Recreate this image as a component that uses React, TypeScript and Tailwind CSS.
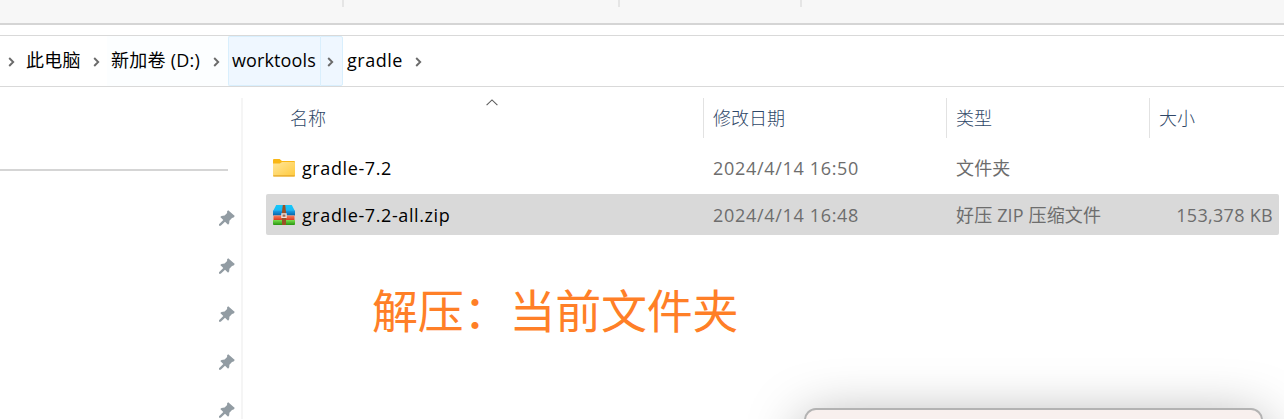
import React from 'react';

const SANS = "font-['Open_Sans','Noto_Sans_CJK_SC',sans-serif]";

function Chevron({ cell }: { cell: string }) {
  return (
    <span className={`flex h-full shrink-0 items-center justify-center ${cell}`}>
      <svg width="7" height="10" viewBox="0 0 7 10" className="mt-px" fill="none" stroke="#6b6b6b" strokeWidth="1.9">
        <path d="M1.2 1 5.2 5 1.2 9" />
      </svg>
    </span>
  );
}

function Pin() {
  return (
    <svg width="16" height="16" viewBox="0 0 16 16" className="shrink-0" fill="#929ca3">
      <path d="M9.2 0.2 15.8 6 14.6 7.6 13 7.9 10.4 10.7 10.2 13.3 9.1 14.7 6 11.8 1.7 15.8H0V14.2L4.3 9.9 1.3 7.1 2.5 5.9 5.6 5.6 8.1 2.9 8.1 1.3Z" />
    </svg>
  );
}

function FolderIcon() {
  return (
    <svg width="22" height="18" viewBox="0 0 22 18" className="shrink-0">
      <defs>
        <linearGradient id="folder" x1="0" y1="0" x2="1" y2="1">
          <stop offset="0" stopColor="#ffe69b" />
          <stop offset="1" stopColor="#ffca3c" />
        </linearGradient>
      </defs>
      <path d="M0 1Q0 0 1 0H6.6L9 2H21Q22 2 22 3V8H0Z" fill="#f9b716" />
      <path d="M0 4.6H6.8L9 3H21.2Q22 3 22 4V16.4Q22 17.5 21 17.5H1Q0 17.5 0 16.4Z" fill="url(#folder)" />
      <path d="M0.3 16.3H21.7V17.5H0.3Z" fill="#e3a529" />
    </svg>
  );
}

function ZipIcon() {
  return (
    <svg width="22" height="20" viewBox="0 0 22 20" className="shrink-0">
      <defs>
        <linearGradient id="lid" x1="0" y1="0" x2="0" y2="1">
          <stop offset="0" stopColor="#12c9fb" />
          <stop offset="1" stopColor="#20b7f2" />
        </linearGradient>
        <linearGradient id="blue" x1="0" y1="0" x2="0" y2="1">
          <stop offset="0" stopColor="#1ba0e8" />
          <stop offset="1" stopColor="#0565a8" />
        </linearGradient>
        <linearGradient id="red" x1="0" y1="0" x2="0" y2="1">
          <stop offset="0" stopColor="#ff805e" />
          <stop offset="1" stopColor="#d63b20" />
        </linearGradient>
        <linearGradient id="green" x1="0" y1="0" x2="0" y2="1">
          <stop offset="0" stopColor="#7be04d" />
          <stop offset="1" stopColor="#26940f" />
        </linearGradient>
      </defs>
      <path d="M3.2 0H18.8L22 6.2H0Z" fill="url(#lid)" />
      <path d="M0 5.6H22V10.5H0Z" fill="url(#blue)" />
      <path d="M0.5 10.5H21.5V15H0.5Z" fill="url(#red)" />
      <path d="M0 15H22V19.3Q22 20 21 20H1Q0 20 0 19.3Z" fill="url(#green)" />
      <path d="M9.8 0H12.2L13 7V20H9V7Z" fill="#9a5126" />
      <path d="M8.9 8.9H13.1V12.3H8.9Z" fill="#a06b55" stroke="#ece4e0" strokeWidth="1.3" />
    </svg>
  );
}

function TopStrip() {
  return (
    <div className="flex h-[25px] shrink-0 border-b-2 border-[#d5d5d5] bg-[#f7f7f7]">
      <div className="h-[7px] w-[344px] border-r-2 border-[#e5e5e5]" />
      <div className="h-[7px] w-[276px] border-r-2 border-[#e5e5e5]" />
      <div className="h-[7px] w-[182px] border-r-2 border-[#e5e5e5]" />
    </div>
  );
}

function AddressBar() {
  return (
    <nav className="mt-[10px] flex h-[52px] shrink-0 items-center whitespace-pre border-y border-[#d9d9d9] text-[18px] text-black">
      <Chevron cell="w-[23px]" />
      <span className="w-[62px] pb-[2px] pl-[3px] tracking-[0.2px]">此电脑</span>
      <Chevron cell="w-[22px]" />
      <span className="flex h-full w-[98px] items-center bg-[#fcfeff] pb-[2px] pl-1 tracking-[0.25px]">新加卷 (D:)</span>
      <Chevron cell="w-[23px] bg-[#fcfeff]" />
      <span className="flex h-full w-[92px] items-center rounded-l-[2px] border border-r-0 border-[#d9effd] bg-[#eff7ff] pb-[2px] pl-[3px] tracking-[0.12px]">worktools</span>
      <Chevron cell="w-[23px] rounded-r-[2px] border border-[#d9effd] bg-[#eff7ff] pr-[2px]" />
      <span className="w-[64px] pb-[2px] pl-1 tracking-[0.5px]">gradle</span>
      <Chevron cell="w-[22px]" />
    </nav>
  );
}

function Sidebar() {
  return (
    <aside className="mt-[11px] flex h-[321px] w-[243px] shrink-0 flex-col overflow-hidden border-r-2 border-[#f5f5f5]">
      <div className="mt-[71px] h-[2px] w-[228px] shrink-0 bg-[#d5d5d5]" />
      <div className="mt-[39px] flex flex-col items-end gap-8 pr-[6px]">
        <Pin />
        <Pin />
        <Pin />
        <Pin />
        <Pin />
      </div>
    </aside>
  );
}

function HeaderRow() {
  return (
    <div className="mt-[11px] flex h-[40px] shrink-0 text-[18px] font-light text-[#2f4767]">
      <div className="relative flex w-[461px] items-center border-r border-[#e2e2e2] pl-[47px]">
        名称
        <svg width="12" height="7" viewBox="0 0 12 7" className="absolute left-[243px] top-px" fill="none" stroke="#5c5c5c" strokeWidth="1.1">
          <path d="M0.6 6.2 6 0.9 11.4 6.2" />
        </svg>
      </div>
      <div className="flex w-[243px] items-center border-r border-[#e2e2e2] pl-[9px]">修改日期</div>
      <div className="flex w-[203px] items-center border-r border-[#e2e2e2] pl-[9px]">类型</div>
      <div className="flex items-center pl-[9px]">大小</div>
    </div>
  );
}

interface FileRowProps {
  icon: React.ReactNode;
  name: string;
  date: string;
  type: string;
  size?: string;
  row: string;
}

function FileRow({ icon, name, date, type, size, row }: FileRowProps) {
  return (
    <div className={`ml-[23px] flex h-[41px] w-[1013px] shrink-0 items-center whitespace-pre rounded-[2px] pl-[7px] pr-[6px] text-[18px] text-[#6d6d6d] ${row}`}>
      {icon}
      <span className="ml-[7px] w-[411px] tracking-[0.6px] text-black">{name}</span>
      <span className="w-[243px] tracking-[0.68px]">{date}</span>
      <span className="w-[203px] tracking-[0.15px]">{type}</span>
      <span className="flex-1 text-right tracking-[0.3px]">{size}</span>
    </div>
  );
}

export default function App() {
  return (
    <div className={`relative flex h-[419px] w-[1284px] flex-col overflow-hidden bg-white font-normal leading-none ${SANS}`}>
      <TopStrip />
      <AddressBar />
      <div className="flex min-h-0 flex-1">
        <Sidebar />
        <main className="flex min-w-0 flex-1 flex-col">
          <HeaderRow />
          <FileRow row="mt-[9px]" icon={<FolderIcon />} name="gradle-7.2" date="2024/4/14 16:50" type="文件夹" />
          <FileRow
            row="mt-[6px] bg-[#d9d9d9]"
            icon={<ZipIcon />}
            name="gradle-7.2-all.zip"
            date="2024/4/14 16:48"
            type="好压 ZIP 压缩文件"
            size="153,378 KB"
          />
          <p className="ml-[129px] mt-[52px] whitespace-pre text-[46px] leading-[46px] tracking-[-0.2px] text-[#ff7f27]">解压：当前文件夹</p>
        </main>
      </div>
      <div className="absolute left-[804px] top-[408px] h-[300px] w-[459px] rounded-[12px] border-2 border-[#b3b3b3] bg-[#f8f0ee] shadow-[0_12px_56px_rgba(0,0,0,0.36)]" />
    </div>
  );
}
